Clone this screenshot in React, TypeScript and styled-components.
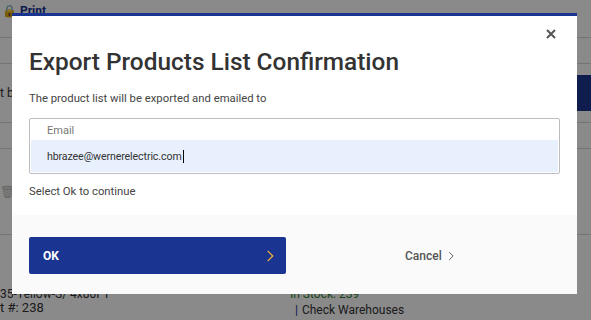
import styled, { createGlobalStyle } from "styled-components";

const GlobalStyle = createGlobalStyle`
  html, body {
    margin: 0;
    padding: 0;
    width: 591px;
    height: 320px;
    overflow: hidden;
    font-family: Roboto, "Liberation Sans", Arial, sans-serif;
    background: #fff;
  }
`;

const Page = styled.div`
  width: 591px;
  height: 320px;
  overflow: hidden;
  display: flex;
  flex-direction: column;
  color: #333;
`;

const PageRow = styled.div<{ $h: number; $line?: boolean }>`
  height: ${({ $h }) => $h}px;
  flex-shrink: 0;
  display: flex;
  align-items: center;
  justify-content: space-between;
  border-bottom: ${({ $line }) => ($line ? "1px solid #d6d6d6" : "none")};
  white-space: nowrap;
  overflow: hidden;
`;

const PrintLink = styled.span`
  font-size: 12px;
  font-weight: 700;
  color: #1a3491;
  padding-left: 2px;
  align-self: flex-start;
  margin-top: 4px;
`;

const Fragment = styled.span<{ $size?: number; $muted?: boolean }>`
  font-size: ${({ $size }) => $size ?? 12}px;
  color: ${({ $muted }) => ($muted ? "#bbb" : "#333")};
`;

const NavyButton = styled.span`
  height: 36px;
  width: 40px;
  background: #1a3491;
  color: #fff;
  font-weight: 700;
  font-size: 12px;
  display: flex;
  align-items: center;
  padding-left: 2px;
  box-sizing: border-box;
`;

const ProductGrid = styled.div`
  display: grid;
  grid-template-columns: 290px 1fr;
  font-size: 12px;
  line-height: 14px;
  padding-top: 52px;
`;

const Stock = styled.div`
  color: #2f7d32;
`;

const Warehouses = styled.div`
  color: #333;
  padding-left: 5px;
  margin-top: 2px;
  & b {
    color: #1a3491;
    font-weight: 400;
    margin-right: 4px;
  }
`;

const Overlay = styled.div`
  position: fixed;
  inset: 0;
  background: rgba(0, 0, 0, 0.46);
  padding: 13px 0 0 12px;
`;

const Modal = styled.div`
  width: 565px;
  background: #fff;
  border-top: 3px solid #1a3491;
  box-sizing: border-box;
  display: flex;
  flex-direction: column;
`;

const Body = styled.div`
  padding: 13px 17px 16px 17px;
  display: flex;
  flex-direction: column;
`;

const CloseRow = styled.div`
  display: flex;
  justify-content: flex-end;
  height: 10px;
  padding-right: 4px;
`;

const Title = styled.h2`
  margin: 9px 0 0;
  font-size: 24.4px;
  font-weight: 500;
  color: #333;
  line-height: 28px;
`;

const Note = styled.p<{ $top?: number }>`
  margin: ${({ $top }) => $top ?? 0}px 0 0;
  font-size: 11.3px;
  color: #444;
  line-height: 14px;
`;

const Field = styled.div`
  margin: 12px 0 11px;
  border: 1px solid #bdbdbd;
  border-radius: 2px;
  display: flex;
  flex-direction: column;
  padding: 1px;
  height: 56px;
  box-sizing: border-box;
`;

const FieldLabel = styled.div`
  height: 20px;
  display: flex;
  align-items: center;
  padding-left: 16px;
  font-size: 11px;
  color: #777;
`;

const FieldValue = styled.div`
  flex: 1;
  background: #e8f0fd;
  display: flex;
  align-items: center;
  padding-left: 16px;
  font-size: 10.6px;
  letter-spacing: -0.1px;
  color: #333;
`;

const Caret = styled.span`
  display: inline-block;
  width: 1px;
  height: 13px;
  background: #000;
  margin-left: 1px;
`;

const Footer = styled.div`
  background: #fafafa;
  height: 79px;
  padding: 0 17px;
  display: flex;
  align-items: center;
`;

const OkButton = styled.button`
  width: 257px;
  height: 37px;
  background: #1a3491;
  border: none;
  border-radius: 2px;
  display: flex;
  align-items: center;
  justify-content: space-between;
  padding: 0 12px 0 14px;
  color: #fff;
  font-family: inherit;
  font-size: 12px;
  font-weight: 700;
  margin-top: 2px;
`;

const CancelLink = styled.span`
  margin-left: 119px;
  margin-top: 2px;
  display: flex;
  align-items: center;
  gap: 6px;
  font-size: 12px;
  font-weight: 500;
  color: #555;
`;

const Chevron = ({ color, w, h }: { color: string; w: number; h: number }) => (
  <svg width={w} height={h} viewBox="0 0 10 16">
    <path d="M2 1.5 L8.5 8 L2 14.5" fill="none" stroke={color} strokeWidth="1.5" />
  </svg>
);

export default function App() {
  return (
    <>
      <GlobalStyle />
      <Page>
        <PageRow $h={37} $line>
          <PrintLink>🔒 Print</PrintLink>
        </PageRow>
        <PageRow $h={25} $line />
        <PageRow $h={58} $line>
          <Fragment>t be</Fragment>
          <NavyButton>Lis</NavyButton>
        </PageRow>
        <PageRow $h={25} $line />
        <PageRow $h={85} $line>
          <Fragment $muted>🗑</Fragment>
        </PageRow>
        <ProductGrid>
          <div>
            <Fragment>35-Yellow-S/ 4x80FT</Fragment>
            <div>
              <Fragment $size={13}>t #: 238</Fragment>
            </div>
          </div>
          <div>
            <Stock>In Stock: 239</Stock>
            <Warehouses>
              <b>|</b>Check Warehouses
            </Warehouses>
          </div>
        </ProductGrid>
      </Page>
      <Overlay>
        <Modal>
          <Body>
            <CloseRow>
              <svg width="10" height="10" viewBox="0 0 10 10">
                <path d="M1 1 L9 9 M9 1 L1 9" stroke="#555" strokeWidth="2" />
              </svg>
            </CloseRow>
            <Title>Export Products List Confirmation</Title>
            <Note $top={16}>The product list will be exported and emailed to</Note>
            <Field>
              <FieldLabel>Email</FieldLabel>
              <FieldValue>
                hbrazee@wernerelectric.com
                <Caret />
              </FieldValue>
            </Field>
            <Note>Select Ok to continue</Note>
          </Body>
          <Footer>
            <OkButton>
              OK
              <Chevron color="#f2b233" w={8} h={14} />
            </OkButton>
            <CancelLink>
              Cancel
              <Chevron color="#555" w={6} h={10} />
            </CancelLink>
          </Footer>
        </Modal>
      </Overlay>
    </>
  );
}
